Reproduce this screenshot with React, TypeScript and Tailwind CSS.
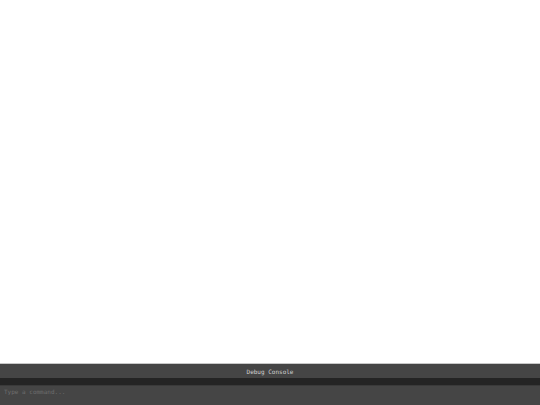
export default function App() {
    return (
        <div className="w-[540px] h-[405px] flex flex-col bg-white overflow-hidden">
            {/* Empty page area */}
            <div className="flex-1" />

            {/* Debug console panel */}
            <div className="flex flex-col border-t border-[#c8c8c8] font-['DejaVu_Sans_Mono',monospace]">
                <div className="h-[14px] bg-[#454545] flex items-center justify-center text-[6px] text-[#d0d0d0]">
                    Debug Console
                </div>
                <div className="h-[7px] bg-[#242424]" />
                <div className="h-[20px] bg-[#454545] border-t border-[#3a3a3a] flex items-start pt-[2px] px-[4px]">
                    <input
                        className="w-full h-[8px] leading-[8px] bg-transparent outline-none text-[6px] text-[#d0d0d0] placeholder:text-[#6e6e6e]"
                        placeholder="Type a command..."
                    />
                </div>
            </div>
        </div>
    );
}
